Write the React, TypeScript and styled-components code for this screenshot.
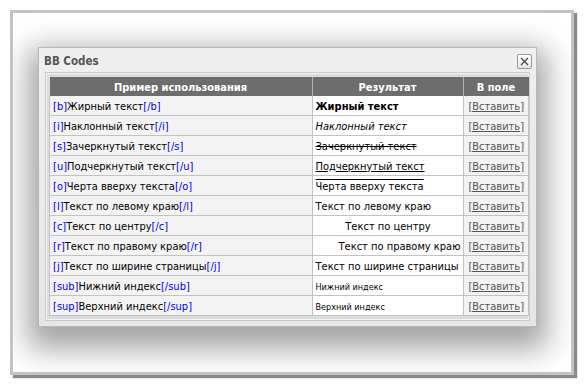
import type { FC, ReactElement, ReactNode } from "react";
import styled, { createGlobalStyle, css } from "styled-components";

const GlobalStyle = createGlobalStyle`
  html, body {
    margin: 0;
    padding: 0;
    background: #ffffff;
  }
  body {
    font-family: "DejaVu Sans Condensed", "DejaVu Sans", Verdana, sans-serif;
    font-stretch: condensed;
    font-size: 11px;
    color: #000;
  }
`;

const Page = styled.div`
  width: 584px;
  height: 386px;
  padding: 10px;
  box-sizing: border-box;
`;

const Frame = styled.div`
  width: 564px;
  height: 365px;
  box-sizing: border-box;
  border: 3px solid #c4c4c4;
  box-shadow: 3px 3px 1px #8a8a8a;
  background: #fff;
  padding: 34px 0 0 25px;
  overflow: hidden;
`;

const Dialog = styled.div`
  width: 499px;
  box-sizing: border-box;
  border: 1px solid #b8b8b8;
  background: linear-gradient(#efefef, #e6e6e6);
  box-shadow: 0 12px 28px 10px rgba(0, 0, 0, 0.36);
  padding: 0 6px 5px 6px;
`;

const TitleBar = styled.div`
  height: 24px;
  display: flex;
  align-items: center;
  justify-content: space-between;
`;

const Title = styled.span`
  font-weight: bold;
  font-size: 11.5px;
  color: #555;
  margin-left: -1px;
  padding-top: 1px;
`;

const CloseButton = styled.button`
  width: 15px;
  height: 15px;
  padding: 0;
  margin-right: -2px;
  margin-top: 2px;
  border: 1px solid #9a9a9a;
  border-radius: 2px;
  background: linear-gradient(#ffffff, #e4e4e4);
  display: flex;
  align-items: center;
  justify-content: center;
  cursor: pointer;
`;

const Panel = styled.div`
  border: 1px solid #cacaca;
  background: #dcdcdc;
  padding: 4px 3px;
  box-shadow: inset 0 0 0 1px #f4f4f4;
`;

const Table = styled.table`
  width: 477px;
  border-collapse: collapse;
  table-layout: fixed;
`;

const HeadCell = styled.th<{ $w: number }>`
  width: ${({ $w }) => $w}px;
  height: 18px;
  padding: 1px 0 0 0;
  background: #6d6d6d;
  color: #fff;
  font-weight: bold;
  font-size: 11px;
  text-align: center;
  border-left: 1px solid #b4b4b4;
  &:first-child { border-left: none; }
`;

const Cell = styled.td<{ $bg?: string; $align?: string }>`
  height: 18px;
  padding: 1px 2px 0 3px;
  background: ${({ $bg }) => $bg ?? "#f3f3f3"};
  text-align: ${({ $align }) => $align ?? "left"};
  border: 1px solid #c2c2c2;
  border-top: none;
  white-space: nowrap;
  overflow: hidden;
`;

const Tag = styled.span`
  color: #0000f0;
`;

type Effect = "b" | "i" | "s" | "u" | "o" | "small" | "none";

const Result = styled.span<{ $fx: Effect }>`
  ${({ $fx }) => {
    switch ($fx) {
      case "b": return css`font-weight: bold;`;
      case "i": return css`font-style: italic;`;
      case "s": return css`text-decoration: line-through;`;
      case "u": return css`text-decoration: underline;`;
      case "o": return css`text-decoration: overline;`;
      case "small": return css`font-size: 9px;`;
      default: return "";
    }
  }}
`;

const Insert = styled.a`
  color: #555;
  text-decoration: underline;
  cursor: pointer;
`;

interface Code {
    tag: string;
    text: string;
    fx: Effect;
    align?: string;
}

const codes: Code[] = [
    { tag: "b", text: "Жирный текст", fx: "b" },
    { tag: "i", text: "Наклонный текст", fx: "i" },
    { tag: "s", text: "Зачеркнутый текст", fx: "s" },
    { tag: "u", text: "Подчеркнутый текст", fx: "u" },
    { tag: "o", text: "Черта вверху текста", fx: "o" },
    { tag: "l", text: "Текст по левому краю", fx: "none" },
    { tag: "c", text: "Текст по центру", fx: "none", align: "center" },
    { tag: "r", text: "Текст по правому краю", fx: "none", align: "right" },
    { tag: "j", text: "Текст по ширине страницы", fx: "none" },
    { tag: "sub", text: "Нижний индекс", fx: "small" },
    { tag: "sup", text: "Верхний индекс", fx: "small" },
];

const CloseIcon: FC = (): ReactElement => (
    <svg width="9" height="9" viewBox="0 0 9 9">
        <path d="M1 1L8 8M8 1L1 8" stroke="#4a4a4a" strokeWidth="1.3" />
    </svg>
);

const Row: FC<{ code: Code }> = ({ code }): ReactElement => {
    const example: ReactNode = (
        <>
            <Tag>[{code.tag}]</Tag>{code.text}<Tag>[/{code.tag}]</Tag>
        </>
    );
    return (
        <tr>
            <Cell>{example}</Cell>
            <Cell $bg="#ffffff" $align={code.align}>
                <Result $fx={code.fx}>{code.text}</Result>
            </Cell>
            <Cell $align="center">
                <Insert>[Вставить]</Insert>
            </Cell>
        </tr>
    );
};

const App: FC = (): ReactElement => (
    <>
        <GlobalStyle />
        <Page>
            <Frame>
                <Dialog>
                    <TitleBar>
                        <Title>BB Codes</Title>
                        <CloseButton aria-label="Закрыть"><CloseIcon /></CloseButton>
                    </TitleBar>
                    <Panel>
                        <Table>
                            <thead>
                                <tr>
                                    <HeadCell $w={262}>Пример использования</HeadCell>
                                    <HeadCell $w={150}>Результат</HeadCell>
                                    <HeadCell $w={65}>В поле</HeadCell>
                                </tr>
                            </thead>
                            <tbody>
                                { codes.map(c => <Row key={c.tag} code={c} />) }
                            </tbody>
                        </Table>
                    </Panel>
                </Dialog>
            </Frame>
        </Page>
    </>
);

export default App;
